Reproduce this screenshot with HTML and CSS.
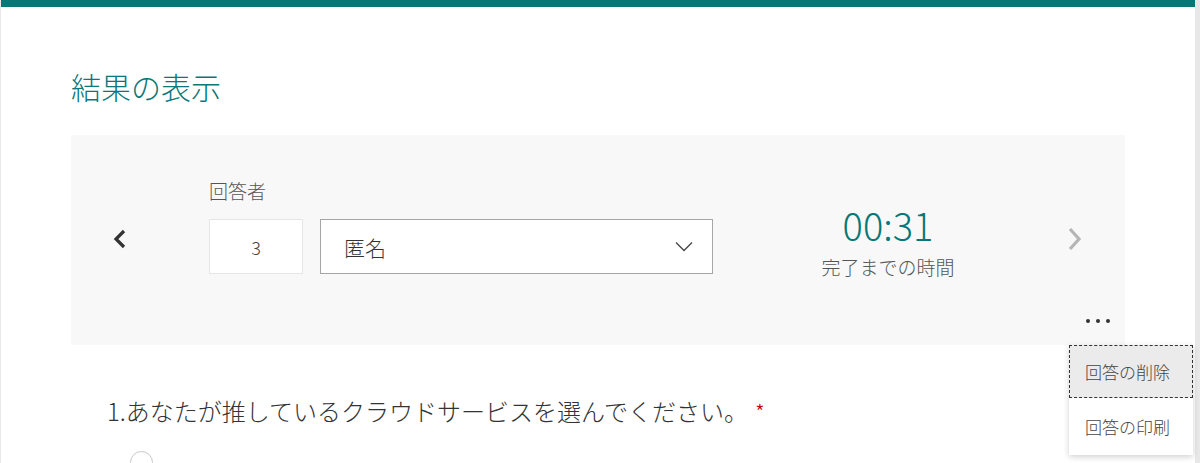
FILE: index.html
```html
<!DOCTYPE html>
<html lang="ja">
<head>
<meta charset="utf-8">
<title>結果の表示</title>
<link rel="stylesheet" href="styles.css">
</head>
<body>
<div class="page">
  <h1 class="title">結果の表示</h1>
  <section class="panel">
    <div class="panel-main">
      <button class="nav nav-prev" aria-label="前へ">
        <svg width="16" height="22" viewBox="0 0 16 22"><path d="M12 3 L4 11 L12 19" fill="none" stroke="#333" stroke-width="3.2"/></svg>
      </button>
      <div class="responder">
        <div class="label">回答者</div>
        <div class="fields">
          <div class="num-box">3</div>
          <div class="select">
            <span>匿名</span>
            <svg width="18" height="11" viewBox="0 0 18 11"><path d="M1 1.5 L9 9.5 L17 1.5" fill="none" stroke="#444" stroke-width="1.3"/></svg>
          </div>
        </div>
      </div>
      <div class="time">
        <div class="time-value">00:31</div>
        <div class="time-label">完了までの時間</div>
      </div>
      <button class="nav nav-next" aria-label="次へ">
        <svg width="16" height="24" viewBox="0 0 16 24"><path d="M4 2 L13 12 L4 22" fill="none" stroke="#b5b5b5" stroke-width="3.2"/></svg>
      </button>
    </div>
    <div class="panel-foot">
      <button class="more" aria-label="その他">
        <span class="dot"></span><span class="dot"></span><span class="dot"></span>
      </button>
    </div>
    <ul class="menu">
      <li class="menu-item focused">回答の削除</li>
      <li class="menu-item">回答の印刷</li>
    </ul>
  </section>
  <div class="question">
    <span class="q-text">1.あなたが推しているクラウドサービスを選んでください。</span><span class="req">*</span>
  </div>
  <div class="options">
    <span class="radio"></span>
  </div>
</div>
</body>
</html>
```

FILE: styles.css
```css
html, body {
  margin: 0;
  padding: 0;
}
body {
  background: #e8e8e8;
  font-family: "Noto Sans CJK JP", "Noto Sans", sans-serif;
  color: #333;
  height: 463px;
  overflow: hidden;
}
.page {
  margin-left: 1px;
  width: 1194px;
  min-height: 456px;
  background: #fff;
  border-top: 7px solid #077878;
}
.title {
  margin: 59px 0 0 70px;
  font-size: 30px;
  line-height: 40px;
  font-weight: 300;
  color: #0b7777;
}
.panel {
  position: relative;
  margin: 29px 0 0 70px;
  width: 1054px;
  height: 210px;
  background: #f8f8f8;
}
.panel-main {
  display: flex;
  align-items: flex-start;
}
.nav {
  width: 22px;
  height: 42px;
  border: 0;
  padding: 0;
  background: transparent;
  display: flex;
  align-items: center;
  justify-content: center;
  margin-top: 83px;
}
.nav-prev {
  margin-left: 38px;
}
.responder {
  margin-left: 78px;
  margin-top: 42px;
}
.label {
  font-size: 19px;
  line-height: 28px;
  font-weight: 300;
  color: #555;
}
.fields {
  display: flex;
  gap: 17px;
  margin-top: 14px;
}
.num-box {
  width: 92px;
  height: 53px;
  border: 1px solid #e6e6e6;
  background: #fff;
  display: flex;
  align-items: center;
  justify-content: center;
  font-size: 18px;
  font-weight: 300;
  color: #444;
}
.select {
  height: 53px;
  border: 1px solid #a6a6a6;
  background: #fff;
  display: flex;
  align-items: center;
  justify-content: space-between;
  padding: 0 19px 0 23px;
  box-sizing: content-box;
  width: 349px;
  font-size: 21px;
  font-weight: 300;
  color: #333;
}
.time {
  flex: 1;
  text-align: center;
  margin-top: 62px;
}
.time-value {
  font-size: 38px;
  line-height: 55px;
  font-weight: 300;
  color: #077878;
}
.time-label {
  margin-top: 1px;
  font-size: 19px;
  line-height: 28px;
  font-weight: 300;
  color: #555;
}
.nav-next {
  margin-right: 40px;
}
.panel-foot {
  display: flex;
  justify-content: flex-end;
  padding-right: 15px;
  margin-top: 32px;
}
.more {
  border: 0;
  background: transparent;
  padding: 0;
  display: flex;
  gap: 6px;
  height: 16px;
  align-items: center;
}
.dot {
  width: 4px;
  height: 4px;
  border-radius: 50%;
  background: #333;
}
.menu {
  position: absolute;
  top: 210px;
  left: 998px;
  width: 124px;
  margin: 0;
  padding: 0;
  list-style: none;
  background: #fff;
  box-shadow: 0 2px 6px rgba(0, 0, 0, 0.18);
  z-index: 2;
}
.menu-item {
  height: 57px;
  display: flex;
  align-items: center;
  padding-left: 16px;
  font-size: 17px;
  font-weight: 300;
  color: #444;
  box-sizing: border-box;
}
.menu-item.focused {
  height: 53px;
  background: #ebebeb;
  outline: 1px dashed #333;
  outline-offset: -1px;
}
.question {
  margin: 50px 0 0 106px;
  font-size: 24px;
  line-height: 32px;
  font-weight: 300;
  color: #333;
}
.req {
  color: #c00000;
  margin-left: 7px;
  font-size: 22px;
}
.options {
  margin: 24px 0 0 129px;
}
.radio {
  display: block;
  width: 23px;
  height: 23px;
  border: 1px solid #c8c8c8;
  border-radius: 50%;
  box-sizing: border-box;
}
```
